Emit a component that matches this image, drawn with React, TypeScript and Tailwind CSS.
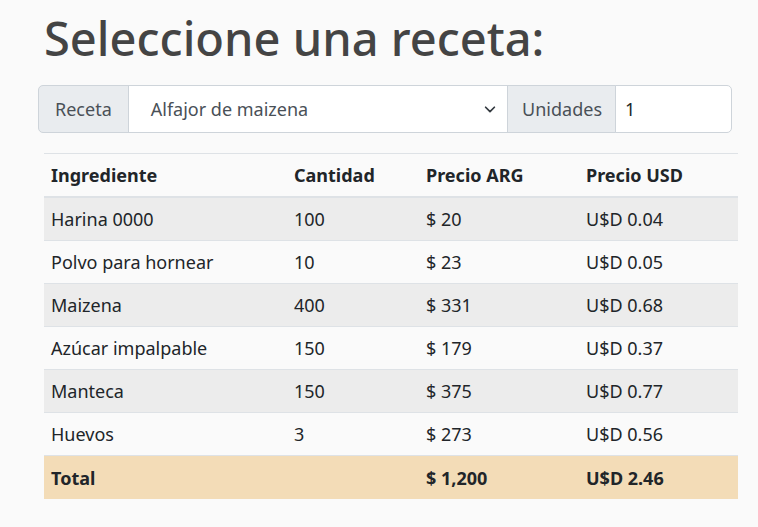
import React from "react";

const rows = [
  ["Harina 0000", "100", "$ 20", "U$D 0.04"],
  ["Polvo para hornear", "10", "$ 23", "U$D 0.05"],
  ["Maizena", "400", "$ 331", "U$D 0.68"],
  ["Azúcar impalpable", "150", "$ 179", "U$D 0.37"],
  ["Manteca", "150", "$ 375", "U$D 0.77"],
  ["Huevos", "3", "$ 273", "U$D 0.56"],
];

export default function App() {
  return (
    <div
      className="min-h-[527px] w-[758px] bg-[#fafafa] text-[#212529]"
      style={{ fontFamily: '"Noto Sans", "Open Sans", sans-serif' }}
    >
      <div className="pl-[44px] pr-[20px] pt-[10px]">
        <h1 className="text-[47px] font-medium leading-[1.2] text-[#444444] m-0">Seleccione una receta:</h1>
      </div>
      <div className="ml-[38px] mt-[19px] flex h-[48px] w-[694px] text-[18px]">
        <div className="flex items-center rounded-l-[5px] border border-[#ced4da] bg-[#e9ecef] px-[16px] text-[#495057]">
          Receta
        </div>
        <div className="-ml-px flex flex-1 items-center justify-between border border-[#ced4da] bg-white pl-[22px] pr-[10px] text-[#495057]">
          <span>Alfajor de maizena</span>
          <svg width="14" height="14" viewBox="0 0 16 16" fill="none" stroke="#343a40" strokeWidth="2" strokeLinecap="round" strokeLinejoin="round">
            <path d="M3 6l5 5 5-5" />
          </svg>
        </div>
        <div className="-ml-px flex items-center border border-[#ced4da] bg-[#e9ecef] pl-[14px] pr-[13px] text-[#495057]">
          Unidades
        </div>
        <div className="-ml-px flex w-[117px] items-center rounded-r-[5px] border border-[#ced4da] bg-white pl-[9px] text-[#212529]">
          1
        </div>
      </div>
      <div className="ml-[44px] mt-[20px] w-[694px]">
        <table className="w-full border-collapse text-[18px] leading-[27px]">
          <colgroup>
            <col className="w-[243px]" />
            <col className="w-[132px]" />
            <col className="w-[160px]" />
            <col className="w-[159px]" />
          </colgroup>
          <thead>
            <tr className="border-t border-[#dee2e6]">
              <th className="border-b-2 border-[#dee2e6] px-[7px] pb-[7px] pt-[8px] text-left font-bold">Ingrediente</th>
              <th className="border-b-2 border-[#dee2e6] px-[7px] pb-[7px] pt-[8px] text-left font-bold">Cantidad</th>
              <th className="border-b-2 border-[#dee2e6] px-[7px] pb-[7px] pt-[8px] text-left font-bold">Precio ARG</th>
              <th className="border-b-2 border-[#dee2e6] px-[7px] pb-[7px] pt-[8px] text-left font-bold">Precio USD</th>
            </tr>
          </thead>
          <tbody>
            {rows.map((r, i) => (
              <tr key={i} className={i % 2 === 0 ? "bg-[#ececec]" : "bg-[#fafafa]"}>
                {r.map((c, j) => (
                  <td key={j} className="border-b border-[#dee2e6] px-[7px] pb-[7px] pt-[8px]">
                    {c}
                  </td>
                ))}
              </tr>
            ))}
            <tr className="bg-[#f3dcb7] font-bold">
              <td className="px-[7px] pb-[7px] pt-[9px]">Total</td>
              <td className="px-[7px] pb-[7px] pt-[9px]"></td>
              <td className="px-[7px] pb-[7px] pt-[9px]">$ 1,200</td>
              <td className="px-[7px] pb-[7px] pt-[9px]">U$D 2.46</td>
            </tr>
          </tbody>
        </table>
      </div>
    </div>
  );
}
